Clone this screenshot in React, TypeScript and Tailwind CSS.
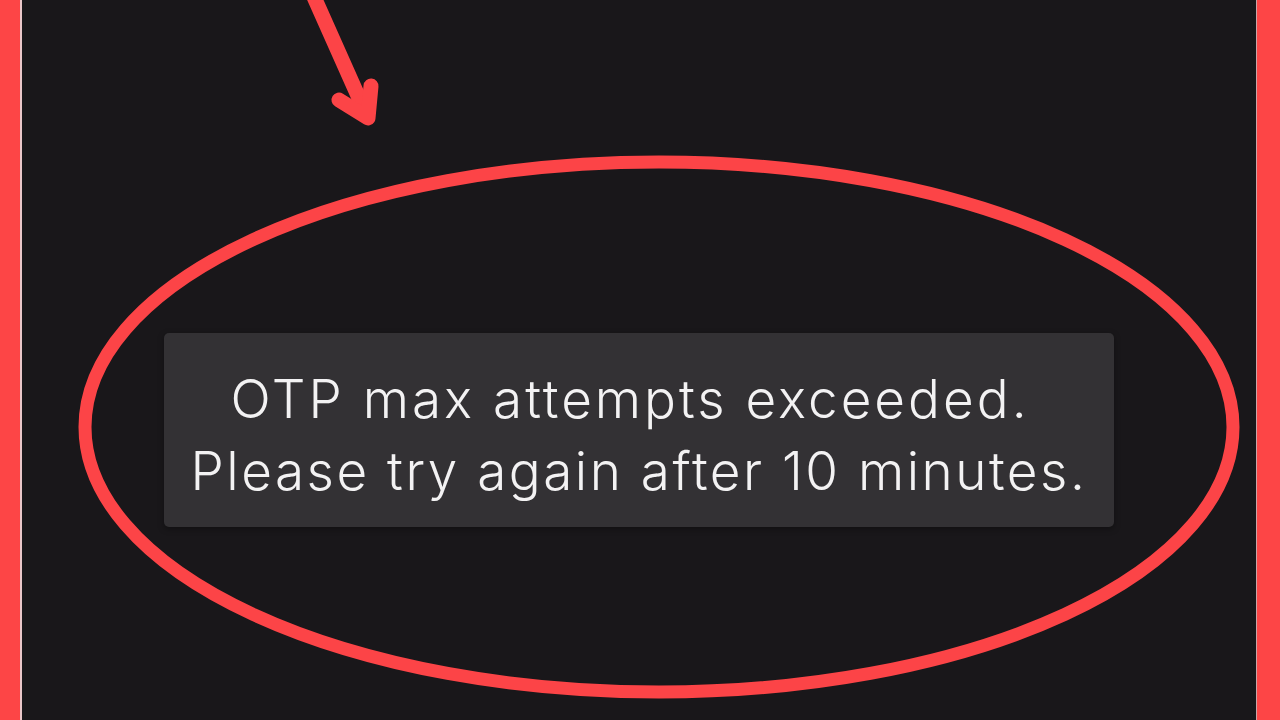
import React from 'react'

export default function App() {
    return (
        <div className="relative w-[1280px] h-[720px] overflow-hidden flex bg-[#19171a]" style={{ fontFamily: 'Inter, "Noto Sans", sans-serif' }}>
            {/* frame bars */}
            <div className="w-[20px] h-full bg-[#fd4546]" />
            <div className="w-[2px] h-full bg-[#e9c6c8]" />

            <main className="flex-1 h-full flex flex-col items-center pt-[333px]">
                <div className="w-[950px] h-[194px] rounded-[5px] bg-[#333134] flex flex-col items-center justify-center pt-[9px] shadow-[0_2px_6px_rgba(0,0,0,0.35)]">
                    <p className="pr-[18px] text-[53px] leading-[72px] font-light text-[#f3f2f3] tracking-[3px]">OTP max attempts exceeded.</p>
                    <p className="text-[53px] leading-[72px] font-light text-[#f3f2f3] tracking-[2.5px]">Please try again after 10 minutes.</p>
                </div>
            </main>

            <div className="w-[1px] h-full bg-[#c9a5a7]" />
            <div className="w-[23px] h-full bg-[#fd4546]" />

            {/* annotation drawing */}
            <svg className="absolute inset-0 pointer-events-none" width="1280" height="720" viewBox="0 0 1280 720">
                <ellipse cx="659" cy="427" rx="574" ry="265" fill="none" stroke="#fc4447" strokeWidth="13" />
                <path d="M310 -12 L367 116" fill="none" stroke="#fc4447" strokeWidth="15" strokeLinecap="round" />
                <path d="M339 100 L368 118 L371 86" fill="none" stroke="#fc4447" strokeWidth="15" strokeLinecap="round" strokeLinejoin="round" />
            </svg>
        </div>
    )
}
